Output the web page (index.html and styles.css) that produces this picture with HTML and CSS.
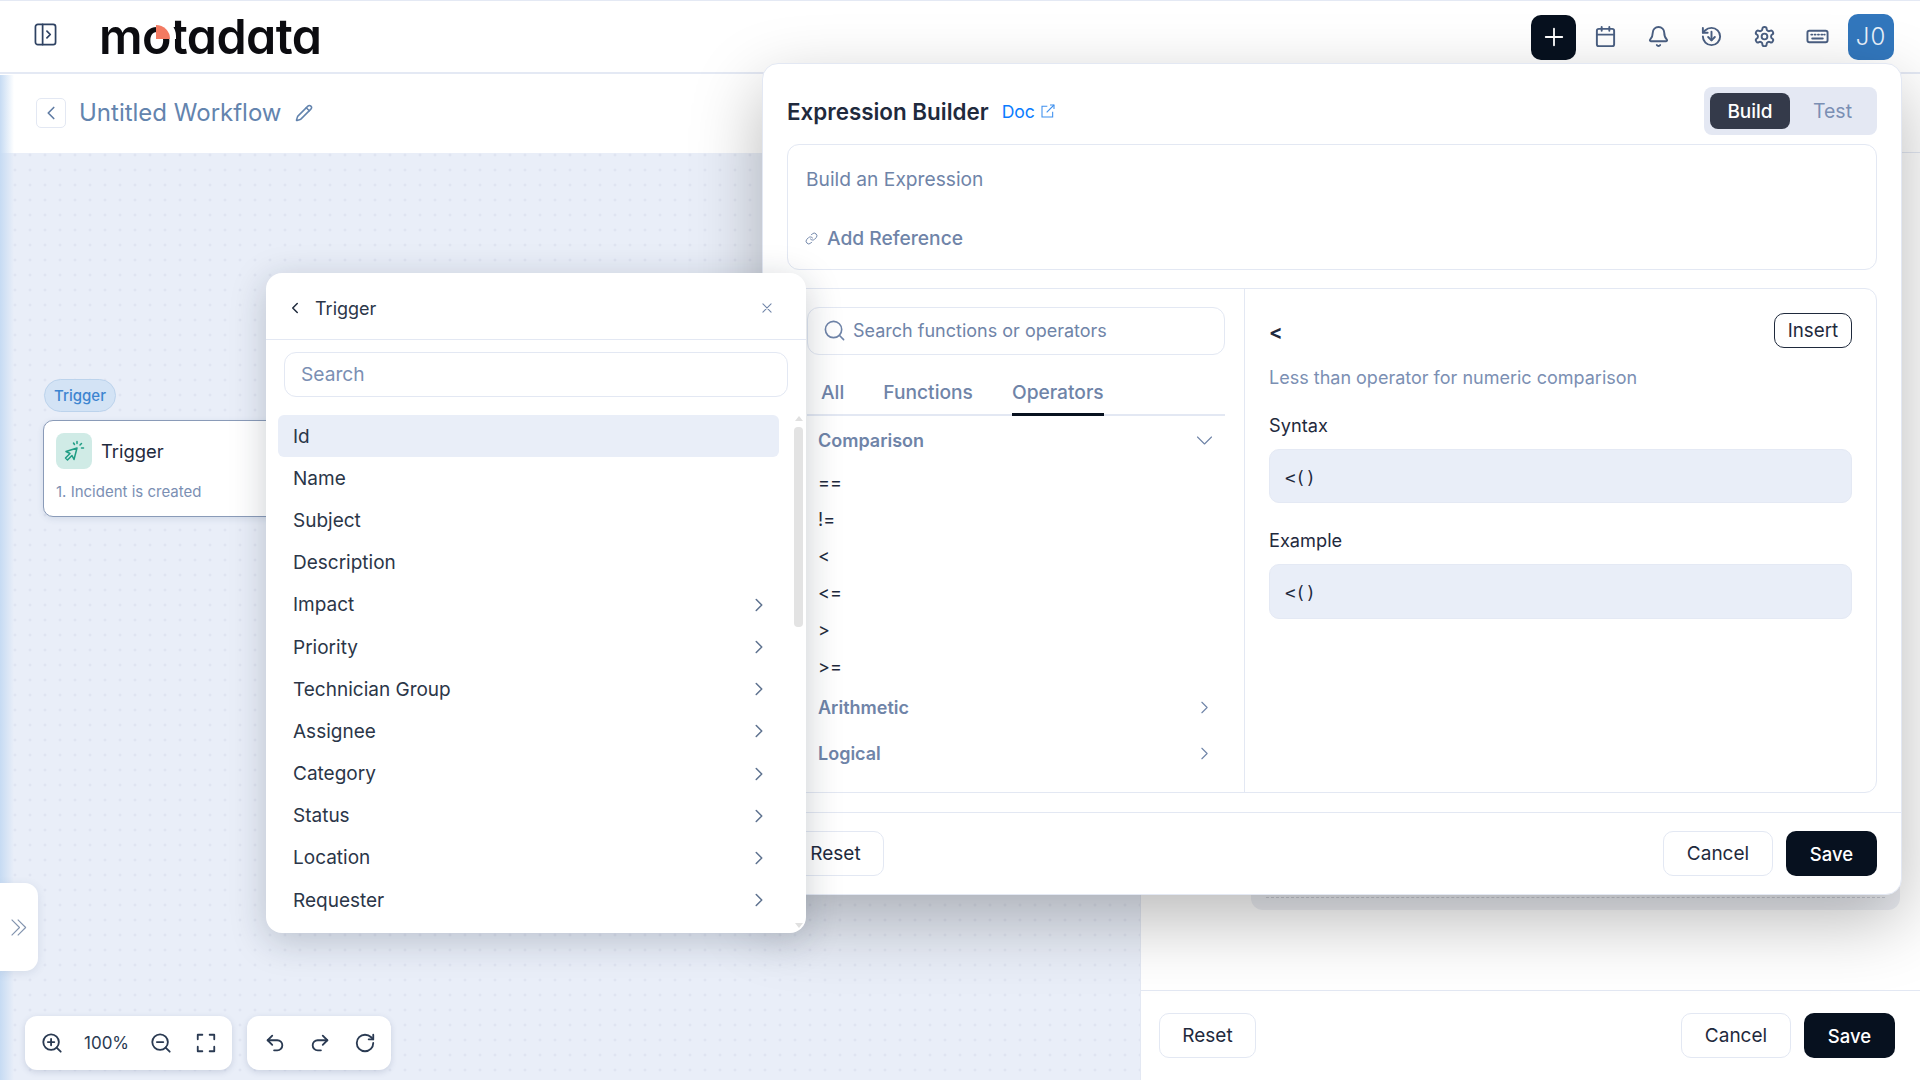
FILE: index.html
```html
<!DOCTYPE html>
<html lang="en">
<head>
<meta charset="utf-8">
<title>Untitled Workflow</title>
<link rel="stylesheet" href="styles.css">
</head>
<body>
<svg class="sprite" xmlns="http://www.w3.org/2000/svg">
  <symbol id="i-panel" viewBox="0 0 24 24"><rect x="1.5" y="1.5" width="21" height="21" rx="2.5"/><path d="M9 1.5v21"/><path d="m13.5 8.5 3.5 3.5-3.5 3.5"/></symbol>
  <symbol id="i-plus" viewBox="0 0 24 24"><path d="M12 3v18M3 12h18"/></symbol>
  <symbol id="i-cal" viewBox="0 0 24 24"><rect x="3" y="4" width="18" height="18" rx="2"/><path d="M16 2v4M8 2v4M3 10h18"/></symbol>
  <symbol id="i-bell" viewBox="0 0 24 24"><path d="M10.268 21a2 2 0 0 0 3.464 0"/><path d="M3.262 15.326A1 1 0 0 0 4 17h16a1 1 0 0 0 .74-1.673C19.41 13.956 18 12.499 18 8A6 6 0 0 0 6 8c0 4.499-1.411 5.956-2.738 7.326"/></symbol>
  <symbol id="i-hist" viewBox="0 0 24 24"><path d="M3 12a9 9 0 1 0 9-9 9.75 9.75 0 0 0-6.74 2.74L3 8"/><path d="M3 3v5h5"/><path d="M12 7v9"/><path d="m8.5 12.5 3.5 3.5 3.5-3.5"/></symbol>
  <symbol id="i-gear" viewBox="0 0 24 24"><path d="M12.22 2h-.44a2 2 0 0 0-2 2v.18a2 2 0 0 1-1 1.73l-.43.25a2 2 0 0 1-2 0l-.15-.08a2 2 0 0 0-2.73.73l-.22.38a2 2 0 0 0 .73 2.73l.15.1a2 2 0 0 1 1 1.72v.51a2 2 0 0 1-1 1.74l-.15.09a2 2 0 0 0-.73 2.73l.22.38a2 2 0 0 0 2.73.73l.15-.08a2 2 0 0 1 2 0l.43.25a2 2 0 0 1 1 1.73V20a2 2 0 0 0 2 2h.44a2 2 0 0 0 2-2v-.18a2 2 0 0 1 1-1.73l.43-.25a2 2 0 0 1 2 0l.15.08a2 2 0 0 0 2.73-.73l.22-.39a2 2 0 0 0-.73-2.73l-.15-.08a2 2 0 0 1-1-1.74v-.5a2 2 0 0 1 1-1.74l.15-.09a2 2 0 0 0 .73-2.73l-.22-.38a2 2 0 0 0-2.73-.73l-.15.08a2 2 0 0 1-2 0l-.43-.25a2 2 0 0 1-1-1.73V4a2 2 0 0 0-2-2z"/><circle cx="12" cy="12" r="3"/></symbol>
  <symbol id="i-keys" viewBox="0 0 24 24"><rect x="1.5" y="6" width="21" height="12" rx="2"/><path d="M5.5 10h1M9 10h1M12.5 10h1M16 10h1M19 10h.5M6.5 14h11"/></symbol>
  <symbol id="i-left" viewBox="0 0 24 24"><path d="m15 18-6-6 6-6"/></symbol>
  <symbol id="i-right" viewBox="0 0 24 24"><path d="m9 18 6-6-6-6"/></symbol>
  <symbol id="i-down" viewBox="0 0 24 24"><path d="m4 8 8 8 8-8"/></symbol>
  <symbol id="i-dbl" viewBox="0 0 24 24"><path d="m3 3 9 9-9 9M10 3l9 9-9 9"/></symbol>
  <symbol id="i-pen" viewBox="0 0 24 24"><path d="M21.174 6.812a1 1 0 0 0-3.986-3.987L3.842 16.174a2 2 0 0 0-.5.83l-1.321 4.352a.5.5 0 0 0 .623.622l4.353-1.32a2 2 0 0 0 .83-.497z"/><path d="m15 5 4 4"/></symbol>
  <symbol id="i-ext" viewBox="0 0 24 24"><path d="M15 3h6v6"/><path d="M10 14 21 3"/><path d="M19 13v8H3V5h8"/></symbol>
  <symbol id="i-link" viewBox="0 0 24 24"><path d="M10 13a5 5 0 0 0 7.54.54l3-3a5 5 0 0 0-7.07-7.07l-1.72 1.71"/><path d="M14 11a5 5 0 0 0-7.54-.54l-3 3a5 5 0 0 0 7.07 7.07l1.71-1.71"/></symbol>
  <symbol id="i-search" viewBox="0 0 24 24"><circle cx="11" cy="11" r="8.5"/><path d="m21.5 21.5-4.5-4.5"/></symbol>
  <symbol id="i-x" viewBox="0 0 24 24"><path d="M19 5 5 19M5 5l14 14"/></symbol>
  <symbol id="i-click" viewBox="0 0 24 24"><path d="M15 9 4 12.5l4 2L3.5 19l2 2 4.500-4.500 2 4z"/><path d="M15 2.500v2M19.500 4.500 18 6M21.500 9h-2M11.500 4l1 1.500"/></symbol>
  <symbol id="i-zin" viewBox="0 0 24 24"><circle cx="11" cy="11" r="8.5"/><path d="m21.5 21.5-4.5-4.5M11 7.5v7M7.5 11h7"/></symbol>
  <symbol id="i-zout" viewBox="0 0 24 24"><circle cx="11" cy="11" r="8.5"/><path d="m21.5 21.5-4.5-4.5M7.5 11h7"/></symbol>
  <symbol id="i-full" viewBox="0 0 24 24"><path d="M3 8V3h5M16 3h5v5M21 16v5h-5M8 21H3v-5"/></symbol>
  <symbol id="i-undo" viewBox="0 0 24 24"><path d="M9 14 4 9l5-5"/><path d="M4 9h10.5a5.5 5.5 0 0 1 5.5 5.5a5.5 5.5 0 0 1-5.5 5.5H11"/></symbol>
  <symbol id="i-redo" viewBox="0 0 24 24"><path d="m15 14 5-5-5-5"/><path d="M20 9H9.5A5.5 5.5 0 0 0 4 14.5A5.5 5.5 0 0 0 9.5 20H13"/></symbol>
  <symbol id="i-rot" viewBox="0 0 24 24"><path d="M21 12a9 9 0 1 1-9-9c2.52 0 4.93 1 6.74 2.74L21 8"/><path d="M21 3v5h-5"/></symbol>
</svg>

<div class="app">
  <header class="topbar">
    <div class="brand">
      <svg class="ico ico-panel"><use href="#i-panel"/></svg>
      <div class="logo">m<span class="logo-o">o<span class="logo-wedge"></span></span>tadata</div>
    </div>
    <div class="top-actions">
      <button class="add-btn"><svg class="ico ico-add"><use href="#i-plus"/></svg></button>
      <span class="top-ico"><svg class="ico"><use href="#i-cal"/></svg></span>
      <span class="top-ico"><svg class="ico"><use href="#i-bell"/></svg></span>
      <span class="top-ico"><svg class="ico"><use href="#i-hist"/></svg></span>
      <span class="top-ico"><svg class="ico"><use href="#i-gear"/></svg></span>
      <span class="top-ico"><svg class="ico"><use href="#i-keys"/></svg></span>
      <div class="avatar">J0</div>
    </div>
  </header>

  <div class="workspace">
    <section class="left-col">
      <div class="subbar">
        <button class="back-btn"><svg class="ico ico-back"><use href="#i-left"/></svg></button>
        <span class="wf-title">Untitled Workflow</span>
        <svg class="ico ico-pen"><use href="#i-pen"/></svg>
      </div>
      <div class="canvas">
        <div class="node-wrap">
          <span class="node-pill">Trigger</span>
          <div class="node">
            <div class="node-head">
              <span class="node-icon"><svg class="ico ico-click"><use href="#i-click"/></svg></span>
              <span class="node-title">Trigger</span>
            </div>
            <div class="node-sub">1. Incident is created</div>
          </div>
        </div>
        <div class="side-tab"><svg class="ico ico-dbl"><use href="#i-dbl"/></svg></div>
        <div class="tools">
          <div class="toolgroup zoomgroup">
            <svg class="ico ico-tool"><use href="#i-zin"/></svg>
            <span class="zoom-val">100%</span>
            <svg class="ico ico-tool"><use href="#i-zout"/></svg>
            <svg class="ico ico-tool"><use href="#i-full"/></svg>
          </div>
          <div class="toolgroup histgroup">
            <svg class="ico ico-tool"><use href="#i-undo"/></svg>
            <svg class="ico ico-tool"><use href="#i-redo"/></svg>
            <svg class="ico ico-tool"><use href="#i-rot"/></svg>
          </div>
        </div>
      </div>
    </section>

    <aside class="side-panel">
      <div class="sp-head"></div>
      <div class="sp-body">
        <div class="sp-line"></div>
        <div class="sp-box"><div class="sp-dashed"></div></div>
      </div>
      <footer class="sp-foot">
        <button class="btn btn-reset">Reset</button>
        <div class="btn-row">
          <button class="btn btn-cancel">Cancel</button>
          <button class="btn btn-save">Save</button>
        </div>
      </footer>
    </aside>
  </div>

  <div class="edge"></div>

  <div class="modal">
    <div class="modal-main">
      <div class="modal-head">
        <div class="modal-title-row">
          <h2 class="modal-title">Expression Builder</h2>
          <span class="doc-link">Doc<svg class="ico ico-ext"><use href="#i-ext"/></svg></span>
        </div>
        <div class="seg">
          <span class="seg-on">Build</span>
          <span class="seg-off">Test</span>
        </div>
      </div>
      <div class="expr-box">
        <div class="expr-ph">Build an Expression</div>
        <div class="expr-ref"><svg class="ico ico-link"><use href="#i-link"/></svg>Add Reference</div>
      </div>
      <div class="lib">
        <div class="lib-left">
          <div class="fn-search"><svg class="ico ico-search"><use href="#i-search"/></svg><span>Search functions or operators</span></div>
          <div class="fn-tabs">
            <span class="fn-tab">All</span>
            <span class="fn-tab">Functions</span>
            <span class="fn-tab fn-tab-on">Operators</span>
          </div>
          <div class="acc-head acc-first"><span>Comparison</span><svg class="ico ico-acc"><use href="#i-down"/></svg></div>
          <div class="op">==</div>
          <div class="op">!=</div>
          <div class="op">&lt;</div>
          <div class="op">&lt;=</div>
          <div class="op">&gt;</div>
          <div class="op">&gt;=</div>
          <div class="acc-head"><span>Arithmetic</span><svg class="ico ico-acc"><use href="#i-right"/></svg></div>
          <div class="acc-head"><span>Logical</span><svg class="ico ico-acc"><use href="#i-right"/></svg></div>
        </div>
        <div class="lib-right">
          <div class="det-head"><strong class="det-name">&lt;</strong><button class="insert-btn">Insert</button></div>
          <p class="det-desc">Less than operator for numeric comparison</p>
          <div class="det-label det-label-1">Syntax</div>
          <div class="code-box">&lt;()</div>
          <div class="det-label det-label-2">Example</div>
          <div class="code-box code-box-2">&lt;()</div>
        </div>
      </div>
    </div>
    <footer class="modal-foot">
      <button class="btn btn-reset">Reset</button>
      <div class="btn-row">
        <button class="btn btn-cancel">Cancel</button>
        <button class="btn btn-save">Save</button>
      </div>
    </footer>
  </div>

  <div class="picker">
    <div class="picker-head">
      <svg class="ico ico-pback"><use href="#i-left"/></svg>
      <span class="picker-title">Trigger</span>
      <svg class="ico ico-x"><use href="#i-x"/></svg>
    </div>
    <div class="picker-search">Search</div>
    <div class="picker-body">
      <ul class="plist">
        <li class="pitem pitem-on">Id</li>
        <li class="pitem">Name</li>
        <li class="pitem">Subject</li>
        <li class="pitem">Description</li>
        <li class="pitem">Impact<svg class="ico ico-pchev"><use href="#i-right"/></svg></li>
        <li class="pitem">Priority<svg class="ico ico-pchev"><use href="#i-right"/></svg></li>
        <li class="pitem">Technician Group<svg class="ico ico-pchev"><use href="#i-right"/></svg></li>
        <li class="pitem">Assignee<svg class="ico ico-pchev"><use href="#i-right"/></svg></li>
        <li class="pitem">Category<svg class="ico ico-pchev"><use href="#i-right"/></svg></li>
        <li class="pitem">Status<svg class="ico ico-pchev"><use href="#i-right"/></svg></li>
        <li class="pitem">Location<svg class="ico ico-pchev"><use href="#i-right"/></svg></li>
        <li class="pitem">Requester<svg class="ico ico-pchev"><use href="#i-right"/></svg></li>
      </ul>
      <div class="pscroll">
        <span class="arr-up"></span>
        <span class="thumb"></span>
        <span class="arr-down"></span>
      </div>
    </div>
  </div>
</div>
</body>
</html>
```

FILE: styles.css
```css
* { box-sizing: border-box; }
html, body { margin: 0; padding: 0; }
body {
  width: 1920px;
  height: 1080px;
  overflow: hidden;
  font-family: Inter, "Noto Sans", sans-serif;
  color: #1f2a3d;
  background: #fff;
}
button { font-family: inherit; cursor: pointer; }
.sprite { display: none; }
.ico { display: block; fill: none; stroke: currentColor; stroke-width: 2; stroke-linecap: round; stroke-linejoin: round; flex: none; }

.app { position: relative; width: 1920px; height: 1080px; display: flex; flex-direction: column; overflow: hidden; }

/* top bar */
.topbar {
  height: 74px;
  flex: none;
  display: flex;
  align-items: center;
  justify-content: space-between;
  background: #fff;
  border-top: 1px solid #e4e9f4;
  border-bottom: 2px solid #e4e9f4;
  padding: 0 26px 0 34px;
}
.brand { display: flex; align-items: center; }
.ico-panel { width: 23px; height: 23px; color: #2e4262; margin-top: -4px; stroke-width: 1.8; }
.logo {
  margin-left: 42px;
  font-size: 48.4px;
  line-height: 1;
  font-weight: 600;
  letter-spacing: -0.6px;
  color: #0c0c10;
  font-feature-settings: "cv11" 1;
  margin-top: 2px;
}
.logo-o { position: relative; display: inline-block; }
.logo-wedge {
  position: absolute;
  left: 50%;
  top: 12px;
  width: 14px;
  height: 14px;
  background: #f37a62;
  border-radius: 0 14px 0 0;
  box-shadow: 3px -3px 0 3px #fff;
}
.top-actions { display: flex; align-items: center; }
.add-btn {
  width: 45px; height: 45px;
  border: 0; border-radius: 10px;
  background: #07111f; color: #fff;
  display: flex; align-items: center; justify-content: center;
  padding: 0;
  margin-top: 1px;
}
.ico-add { width: 22px; height: 22px; }
.top-ico { width: 53px; display: flex; justify-content: center; color: #4a5f82; }
.top-ico .ico { width: 23px; height: 23px; }
.top-actions .top-ico:first-of-type { margin-left: 3px; }
.avatar {
  width: 46px; height: 46px;
  margin-left: 4px;
  border-radius: 10px;
  background: #3277bd;
  color: #e9f1fa;
  font-size: 24px;
  font-weight: 300;
  letter-spacing: 1px;
  display: flex; align-items: center; justify-content: center;
}

/* workspace */
.workspace { flex: 1; display: flex; min-height: 0; }
.left-col { width: 1141px; flex: none; display: flex; flex-direction: column; }
.subbar {
  height: 79px;
  flex: none;
  display: flex;
  align-items: center;
  padding: 0 0 2px 36px;
  background: #fff;
}
.back-btn {
  width: 30px; height: 30px;
  padding: 0;
  display: flex; align-items: center; justify-content: center;
  background: #fff;
  border: 1px solid #e3e8f3;
  border-radius: 5px;
  color: #5f7ba3;
}
.ico-back { width: 22px; height: 22px; stroke-width: 1.8; }
.wf-title { margin-left: 13px; font-size: 24px; color: #6384ae; }
.ico-pen { width: 18px; height: 18px; margin-left: 13px; color: #6384ae; }

.canvas {
  position: relative;
  flex: 1;
  background-color: #e9eef8;
  background-image: radial-gradient(circle, #dbe1ee 1.1px, transparent 1.4px);
  background-size: 15px 15px;
  background-position: -7.5px -5.5px;
  border-right: 1px solid #e3e8f3;
}
.node-wrap { position: absolute; left: 43px; top: 226px; width: 280px; }
.node-pill {
  display: inline-flex; align-items: center; justify-content: center;
  width: 72px; height: 33px;
  margin-left: 1px;
  background: #d3e3f5;
  border: 1px solid #bcd3ec;
  border-radius: 17px;
  font-size: 15px;
  font-weight: 500;
  color: #3d85d0;
}
.node {
  margin-top: 8px;
  height: 97px;
  background: #fff;
  border: 1px solid #8a9bb8;
  border-radius: 10px;
  padding: 12px;
  box-shadow: 0 2px 6px rgba(60, 80, 120, .12);
}
.node-head { display: flex; align-items: center; }
.node-icon {
  width: 36px; height: 36px;
  border-radius: 8px;
  background: #d0ebe6;
  color: #1f9d84;
  display: flex; align-items: center; justify-content: center;
}
.ico-click { width: 24px; height: 24px; stroke-width: 1.5; }
.node-title { margin-left: 9px; font-size: 18.4px; }
.node-sub { margin-top: 13px; font-size: 15px; color: #7b8fb3; }

.side-tab {
  position: absolute; left: 0; top: 730px;
  width: 38px; height: 88px;
  background: #fff;
  border-radius: 0 13px 13px 0;
  display: flex; align-items: center; padding-left: 9px;
  box-shadow: 0 2px 10px rgba(60, 80, 120, .12);
  color: #8293ae;
  z-index: 2;
}
.ico-dbl { width: 21px; height: 21px; stroke-width: 1.3; stroke-linecap: butt; }
.tools { position: absolute; left: 25px; top: 863px; display: flex; gap: 15px; }
.toolgroup {
  height: 54px;
  background: #fff;
  border-radius: 12px;
  display: flex; align-items: center;
  box-shadow: 0 2px 6px rgba(60, 80, 120, .18);
  color: #2a3a52;
}
.zoomgroup { width: 207px; padding-left: 16px; }
.zoomgroup .ico-tool:nth-of-type(2) { margin-left: 20px; }
.zoomgroup .ico-tool:nth-of-type(3) { margin-left: 23px; }
.histgroup { width: 144px; padding-left: 17px; gap: 23px; }
.ico-tool { width: 22px; height: 22px; }
.zoom-val { margin-left: 21px; font-size: 17px; width: 46px; }

/* side panel */
.side-panel { flex: 1; display: flex; flex-direction: column; background: #fff; }
.sp-head { height: 79px; flex: none; border-bottom: 1px solid #e3e8f3; }
.sp-body { flex: 1; position: relative; padding: 0 20px 0 110px; display: flex; flex-direction: column; }
.sp-line { height: 211px; flex: none; border-bottom: 1px solid #e3e8f3; }
.sp-box {
  margin-top: auto; margin-bottom: 80px;
  height: 300px;
  background: #eef0f5;
  border-radius: 12px;
  padding: 0 15px 12px;
  display: flex; flex-direction: column;
}
.sp-dashed { flex: 1; border-bottom: 1px dashed #c9ccd4; }
.sp-foot {
  height: 90px; flex: none;
  border-top: 1px solid #e3e8f3;
  display: flex; align-items: flex-start; justify-content: space-between;
  padding: 22px 25px 0 18px;
}
.btn-row { display: flex; gap: 13px; }
.btn { height: 45px; border-radius: 10px; font-size: 19px; padding: 0; }
.btn-reset { width: 97px; background: #fff; border: 1px solid #e3e8f3; color: #1f2a3d; }
.btn-cancel { width: 110px; background: #fff; border: 1px solid #e3e8f3; color: #1f2a3d; }
.btn-save { width: 91px; background: #07111f; border: 0; color: #fff; font-weight: 500; font-size: 18.5px; }

.edge {
  position: absolute; left: 0; top: 75px; bottom: 0; width: 14px;
  background: linear-gradient(90deg, #c6dbf3, rgba(198, 219, 243, 0));
  pointer-events: none;
  z-index: 1;
}

/* modal */
.modal {
  position: absolute; left: 762px; top: 63px;
  width: 1140px; height: 832px;
  z-index: 5;
  background: #fff;
  border: 1px solid #e3e8f3;
  border-radius: 16px;
  box-shadow: 0 25px 70px rgba(0, 0, 0, .28);
  display: flex; flex-direction: column;
}
.modal-main { padding: 23px 24px 0 24px; height: 748px; flex: none; display: flex; flex-direction: column; }
.modal-head { height: 48px; flex: none; display: flex; justify-content: space-between; align-items: center; }
.modal-title-row { display: flex; align-items: center; }
.modal-title { margin: 0; font-size: 22.4px; font-weight: 600; color: #1f2a3d; }
.doc-link { display: flex; align-items: center; margin-left: 13px; font-size: 17.6px; color: #0a7cff; gap: 5px; }
.ico-ext { width: 16px; height: 16px; stroke-width: 1.6; stroke-linecap: butt; stroke-linejoin: miter; color: #3d8fee; }
.seg {
  width: 173px; height: 48px;
  padding: 6px;
  background: #e4e8f3;
  border-radius: 8px;
  display: flex; align-items: center;
  font-size: 19px;
}
.seg-on {
  width: 80px; height: 36px;
  border-radius: 8px;
  background: #343a4a; color: #fff;
  font-weight: 500;
  display: flex; align-items: center; justify-content: center;
}
.seg-off { flex: 1; text-align: center; color: #7b8fb3; padding-left: 4px; font-size: 19.5px; }
.expr-box {
  margin-top: 9px;
  height: 126px; flex: none;
  border: 1px solid #e3e8f3;
  border-radius: 12px;
  padding: 22px 18px 0;
}
.expr-ph { font-size: 19.2px; line-height: 24px; color: #6f84a8; }
.expr-ref { margin-top: 35px; display: flex; align-items: center; font-size: 19.2px; line-height: 24px; font-weight: 500; color: #6f84a8; }
.ico-link { width: 13px; height: 13px; margin-right: 9px; margin-left: -1px; stroke-width: 1.8; }
.lib {
  margin-top: 18px;
  height: 505px; flex: none;
  border: 1px solid #e3e8f3;
  border-radius: 12px;
  display: flex;
}
.lib-left {
  width: 457px; flex: none;
  padding: 18px 19px 0 19px;
  border-right: 1px solid #e3e8f3;
}
.fn-search {
  height: 48px;
  border: 1px solid #e3e8f3;
  border-radius: 12px;
  display: flex; align-items: center;
  padding: 0 0 2px 15px;
  font-size: 18px;
  color: #6f84a8;
}
.ico-search { width: 23px; height: 23px; margin-right: 7px; stroke-width: 1.7; }
.fn-tabs {
  height: 61px;
  border-bottom: 2px solid #e3e8f3;
  display: flex; align-items: flex-end; gap: 39px;
  padding-left: 14px;
  font-size: 19.2px;
  font-weight: 500;
  color: #6f84a8;
}
.fn-tab { padding-bottom: 9px; margin-bottom: -2px; border-bottom: 3px solid transparent; }
.fn-tab-on { border-bottom-color: #07111f; }
.acc-head {
  height: 46px;
  display: flex; align-items: center; justify-content: space-between;
  padding: 0 10px 0 11px;
  font-size: 18px;
  font-weight: 600;
  color: #6f84a8;
}
.acc-first { height: 48px; padding-top: 1px; }
.ico-acc { width: 21px; height: 21px; stroke-width: 1.3; }
.op {
  height: 36.8px;
  padding-left: 11px;
  display: flex; align-items: center;
  font-size: 18px;
  font-feature-settings: "calt" 0, "liga" 0;
  color: #1f2a3d;
}
.lib-right { flex: 1; padding: 24px 24px 0 24px; }
.det-head { display: flex; align-items: center; justify-content: space-between; height: 35px; }
.det-name { font-size: 20px; font-weight: 700; margin-top: 3px; }
.insert-btn {
  width: 78px; height: 35px;
  padding: 0;
  background: #fff;
  border: 1px solid #1f2a3d;
  border-radius: 10px;
  font-size: 18.8px;
  color: #1f2a3d;
}
.det-desc { margin: 19px 0 0; font-size: 18px; line-height: 22px; color: #7b8fb3; }
.det-label { font-size: 18.2px; line-height: 22px; }
.det-label-1 { margin-top: 25px; }
.det-label-2 { margin-top: 26px; }
.code-box {
  margin-top: 13px;
  height: 54px;
  background: #e9eef8;
  border: 1px solid #e4e9f4;
  border-radius: 10px;
  display: flex; align-items: center;
  padding: 3px 0 0 15px;
  font-family: "DejaVu Sans Mono", "Liberation Mono", monospace;
  font-size: 17.5px;
  letter-spacing: -0.4px;
  color: #1f2a3d;
}
.code-box-2 { height: 55px; }
.modal-foot {
  flex: 1;
  border-top: 1px solid #e3e8f3;
  display: flex; align-items: flex-start; justify-content: space-between;
  padding: 18px 24px 0 24px;
}

/* field picker */
.picker {
  position: absolute; left: 266px; top: 273px;
  width: 540px; height: 660px;
  z-index: 6;
  background: #fff;
  border-radius: 16px;
  box-shadow: 0 8px 36px rgba(20, 30, 50, .22);
  display: flex; flex-direction: column;
}
.picker-head {
  height: 67px; flex: none;
  border-bottom: 1px solid #e3e8f3;
  display: flex; align-items: center;
  padding: 4px 32px 0 20px;
  color: #1f2a3d;
}
.ico-pback { width: 18px; height: 18px; stroke-width: 2; }
.picker-title { margin-left: 11px; font-size: 18px; flex: 1; color: #2b3648; }
.ico-x { width: 14px; height: 14px; color: #6f84a8; stroke-width: 1.8; }
.picker-search {
  margin: 12px 18px 0;
  height: 45px; flex: none;
  border: 1px solid #e3e8f3;
  border-radius: 12px;
  display: flex; align-items: center;
  padding: 0 0 1px 16px;
  font-size: 19.2px;
  color: #7b8fb3;
}
.picker-body { margin-top: 18px; padding-left: 12px; display: flex; gap: 15px; }
.plist { list-style: none; margin: 0; padding: 0; width: 501px; flex: none; }
.pitem {
  height: 42.2px;
  display: flex; align-items: center; justify-content: space-between;
  padding: 0 9px 0 15px;
  border-radius: 6px;
  font-size: 19px;
  color: #2b3648;
}
.pitem-on { background: #e9eef8; }
.ico-pchev { width: 22px; height: 22px; color: #5f7390; stroke-width: 1.7; }
.pscroll { width: 9px; flex: none; display: flex; flex-direction: column; align-items: center; }
.arr-up { width: 0; height: 0; border: 4px solid transparent; border-top: 0; border-bottom: 5px solid #e0e0e0; margin-top: 1px; }
.thumb { width: 9px; height: 200px; margin-top: 6px; background: #e3e3e3; border-radius: 4px; }
.arr-down { width: 0; height: 0; border: 4px solid transparent; border-bottom: 0; border-top: 5px solid #e0e0e0; margin-top: 296px; }
```
